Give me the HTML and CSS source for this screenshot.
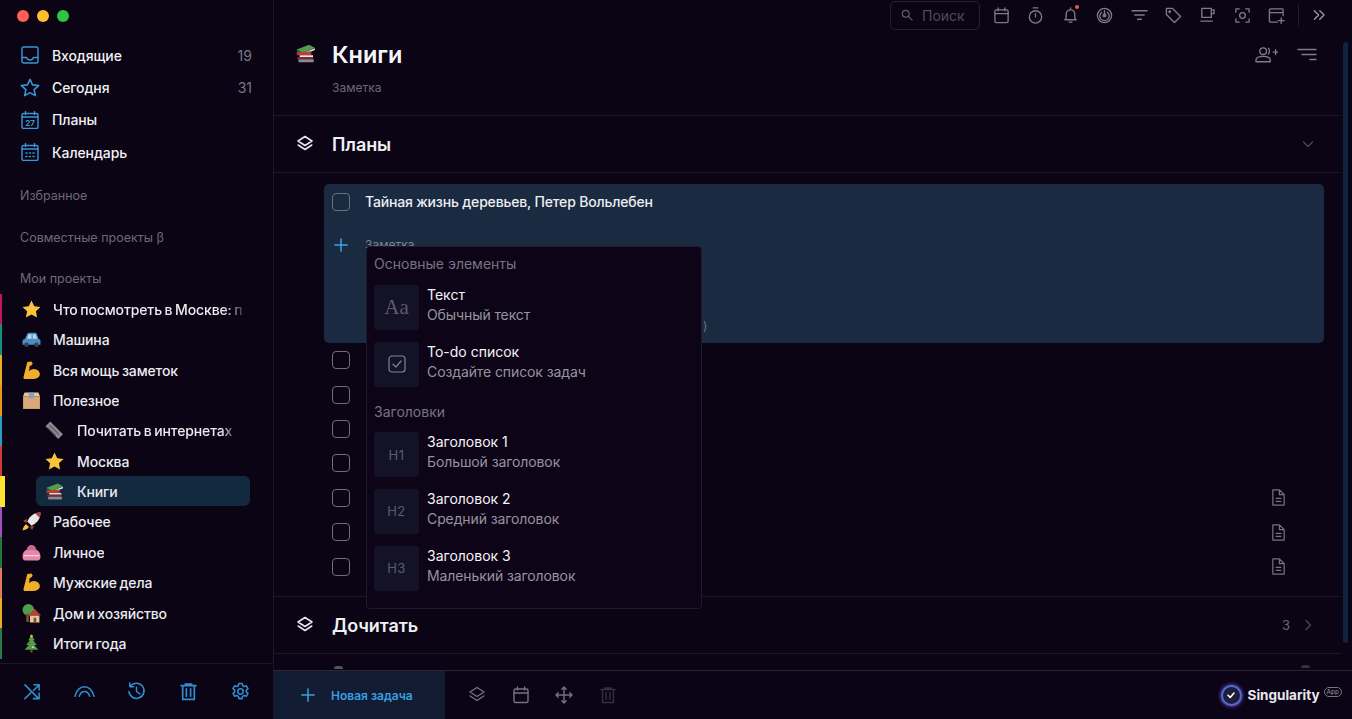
FILE: index.html
```html
<!DOCTYPE html>
<html lang="ru">
<head>
<meta charset="utf-8">
<title>Книги</title>
<link rel="stylesheet" href="styles.css">
</head>
<body>
<svg class="sprite" xmlns="http://www.w3.org/2000/svg">
  <symbol id="i-layers" viewBox="0 0 18 18"><path d="M9 1.500 16 6 9 10.500 2 6Z"/><path d="M2.200 10 9 14.500 15.800 10"/></symbol>
  <symbol id="i-cal" viewBox="0 0 18 18"><rect x="2" y="3" width="14" height="13.500" rx="1.500"/><path d="M2 7h14M5.500 1v3M12.500 1v3"/></symbol>
  <symbol id="i-trash" viewBox="0 0 18 18"><path d="M2 3.500h14M6 3.500V2h6v1.500M3.500 3.500V16.500h11V3.500M7 6.500v7M11 6.500v7"/></symbol>
  <symbol id="i-doc" viewBox="0 0 18 18"><path d="M3 1h7l5 5v11H3ZM10 1v5h5M6.500 10h5M6.500 13h5"/></symbol>
  <symbol id="i-plus" viewBox="0 0 16 16"><path d="M8 1v14M1 8h14"/></symbol>
  <symbol id="e-star" viewBox="0 0 18 18"><path class="f-star" d="M9 .5l2.600 5.400 5.900.8-4.300 4 1.100 5.800L9 13.700l-5.300 2.800 1.100-5.800-4.300-4 5.900-.8Z"/></symbol>
  <symbol id="e-arm" viewBox="0 0 18 18"><path class="f-arm" d="M5 1 9 .5l1.200 2-1.800 2-1.200.2-.4 5c1.800-2 4.300-2.800 6.700-1.700 2.800 1.200 3.800 3.200 3.300 5.500-.5 2.300-3.200 3.500-6.500 3.500H2.500c-1 0-1.300-1-1-2Z"/></symbol>
  <symbol id="e-books" viewBox="0 0 18 18"><path class="f-green" d="M1.500 5.500 12 1.500 17 4 7 8.500Z"/><path class="f-greend" d="M1.500 5.500 7 8.500V10L1.500 7Z"/><path class="f-white" d="M7 8.500 17 4.500V6L7 10Z"/><path class="f-red" d="M1.500 8 14 7v3.500H1.500Z"/><path class="f-white" d="M4 10.500h11.500V12H4Z"/><path class="f-redd" d="M2 12h13.500v2H2Z"/><path class="f-grey" d="M3 14h13v2.500H3Z"/></symbol>
  <symbol id="e-car" viewBox="0 0 18 18"><path class="f-blue" d="M.5 10.500c0-1.200 1-1.700 2.200-2L5 3.500C5.300 2.800 5.800 2.500 6.500 2.500h6c.7 0 1.200.3 1.500 1l1.800 5c1 .3 1.700.8 1.700 2v3.500H.5Z"/><path class="f-glass" d="M6.200 4h2.800v4.300H4.800ZM10.200 4h2.600l1.400 4.300h-4Z"/><circle class="f-dark" cx="4.300" cy="14" r="2.200"/><circle class="f-dark" cx="13.700" cy="14" r="2.200"/></symbol>
  <symbol id="e-box" viewBox="0 0 18 18"><path class="f-box" d="M1 5h16v12H1Z"/><path class="f-boxlight" d="M2.500 1.500h13L17 5H1Z"/><path class="f-bluegrey" d="M6.500 1.500h5V7h-5Z"/></symbol>
  <symbol id="e-paper" viewBox="0 0 18 18"><path class="f-grey" d="M5 .5 17 12.500 12.500 17 .5 5Z"/><path class="f-greyd" d="M4.500 4 13 12.500M2.500 6 10 13.500"/></symbol>
  <symbol id="e-rocket" viewBox="0 0 18 18"><path class="f-white" d="M17.500.5c-4 0-8 1.500-10.500 5l-2 3.500 4 4 3.500-2c3.500-2.500 5-6.500 5-10.500Z"/><path class="f-red" d="M17.500.5c-1.800 0-3.500.3-5 1l4 4c.7-1.500 1-3.200 1-5Z"/><path class="f-red" d="M5 6.500 1 8.500 4 10.500ZM11.500 13l-2 4-2-3Z"/><path class="f-star" d="M4 11.500c-1.500.5-2.800 2.300-3.500 6 3.500-.7 5.500-2 6-3.500Z"/></symbol>
  <symbol id="e-purse" viewBox="0 0 18 18"><path class="f-pink" d="M.5 13c0-5 3.500-7.500 8.500-7.500s8.500 2.500 8.500 7.500c0 2.500-1 3.500-2.500 3.500H3C1.500 16.500.5 15.500.5 13Z"/><path class="f-pinkl" d="M4.500 7.500C4.500 4 6.500 2 9 2s4.500 2 4.500 5.500c-2.500-1.200-6.500-1.200-9 0Z"/><path class="f-white" d="M1.500 11.500h15v1h-15Z"/></symbol>
  <symbol id="e-house" viewBox="0 0 18 18"><circle class="f-green" cx="6" cy="5.500" r="5.500"/><path class="f-wood" d="M4 9h2.500v8H4Z"/><path class="f-red" d="M12 4.500l6 6.500H6Z"/><path class="f-boxlight" d="M7.500 11h9v6.500h-9Z"/><path class="f-wood" d="M11 13h2.500v4.500H11Z"/></symbol>
  <symbol id="e-tree" viewBox="0 0 18 18"><path class="f-green" d="M9 .5l3 5.500h-1.500l3.500 4.500h-2.500l4 4.500h-13l4-4.500H4L7.500 6H6Z"/><path class="f-wood" d="M8 15h2v2.500H8Z"/><circle class="f-star" cx="9" cy="1.800" r="1.200"/><circle class="f-red" cx="7.500" cy="9" r=".8"/><circle class="f-white" cx="10.500" cy="12.500" r=".8"/></symbol>
</svg>

<div class="app">
  <aside class="sidebar">
    <div class="lights"><span class="light l-red"></span><span class="light l-yellow"></span><span class="light l-green"></span></div>
    <nav class="nav">
      <a class="nav-row">
        <svg class="nav-icon" viewBox="0 0 18 18"><rect x="1" y="1" width="16" height="16" rx="1.500"/><path d="M1 11.500h4.500c.7 2 2 2.500 3.500 2.500s2.800-.5 3.500-2.500H17"/></svg>
        <span class="nav-label">Входящие</span><span class="nav-count">19</span>
      </a>
      <a class="nav-row">
        <svg class="nav-icon nav-icon-lg" viewBox="0 0 18 18"><path d="M9 1.200l2.300 5 5.500.6-4.100 3.700 1.100 5.400L9 13.200l-4.800 2.700 1.100-5.400L1.200 6.800l5.500-.6Z"/></svg>
        <span class="nav-label">Сегодня</span><span class="nav-count">31</span>
      </a>
      <a class="nav-row">
        <svg class="nav-icon" viewBox="0 0 18 18"><rect x="1" y="2.500" width="16" height="15" rx="1.500"/><path d="M1 6h16M4.500 .5v3M13.500 .5v3"/><text class="cal-num" x="9" y="15" text-anchor="middle">27</text></svg>
        <span class="nav-label">Планы</span>
      </a>
      <a class="nav-row">
        <svg class="nav-icon" viewBox="0 0 18 18"><rect x="1" y="2.500" width="16" height="15" rx="1.500"/><path d="M1 6h16M4.500 .5v3M13.500 .5v3"/><path class="dots" d="M5 10h1M8.500 10h1M12 10h1M5 13.500h1M8.500 13.500h1M12 13.500h1"/></svg>
        <span class="nav-label">Календарь</span>
      </a>
    </nav>
    <div class="side-head side-head-fav">Избранное</div>
    <div class="side-head side-head-shared">Совместные проекты β</div>
    <div class="side-head side-head-mine">Мои проекты</div>
    <ul class="projects">
      <li class="proj c-crimson"><svg class="emoji"><use href="#e-star"/></svg><span class="proj-label fade">Что посмотреть в Москве: п</span></li>
      <li class="proj c-teal"><svg class="emoji"><use href="#e-car"/></svg><span class="proj-label">Машина</span></li>
      <li class="proj c-gold"><svg class="emoji"><use href="#e-arm"/></svg><span class="proj-label">Вся мощь заметок</span></li>
      <li class="proj c-orange"><svg class="emoji"><use href="#e-box"/></svg><span class="proj-label">Полезное</span></li>
      <li class="proj proj-sub c-cyan"><svg class="emoji"><use href="#e-paper"/></svg><span class="proj-label fade-sub">Почитать в интернетах</span></li>
      <li class="proj proj-sub c-red"><svg class="emoji"><use href="#e-star"/></svg><span class="proj-label">Москва</span></li>
      <li class="proj proj-sub proj-active c-yellow"><svg class="emoji"><use href="#e-books"/></svg><span class="proj-label">Книги</span></li>
      <li class="proj c-purple"><svg class="emoji"><use href="#e-rocket"/></svg><span class="proj-label">Рабочее</span></li>
      <li class="proj c-green"><svg class="emoji"><use href="#e-purse"/></svg><span class="proj-label">Личное</span></li>
      <li class="proj c-salmon"><svg class="emoji"><use href="#e-arm"/></svg><span class="proj-label">Мужские дела</span></li>
      <li class="proj c-gold"><svg class="emoji"><use href="#e-house"/></svg><span class="proj-label">Дом и хозяйство</span></li>
      <li class="proj c-green2"><svg class="emoji"><use href="#e-tree"/></svg><span class="proj-label">Итоги года</span></li>
    </ul>
    <div class="side-foot">
      <svg class="foot-icon" viewBox="0 0 20 20"><path d="M2 3l14.500 14.500M17 11.500V17.500H11M11.500 3H17V8.500M17 3 11 9M2 17.500 8 11.500"/></svg>
      <svg class="foot-icon foot-arc" viewBox="0 0 24 20"><path d="M2 15C4 8 8 5 12 5s8 3 10 10M6.500 15c1.200-3.500 3.200-5 5.500-5s4.300 1.500 5.500 5"/></svg>
      <svg class="foot-icon" viewBox="0 0 20 20"><path d="M3.500 4.500A8 8 0 1 1 2 10M3 1v4h4M10 5.500V10l3.500 2.500"/></svg>
      <svg class="foot-icon" viewBox="0 0 18 18"><use href="#i-trash"/></svg>
      <svg class="foot-icon" viewBox="0 0 20 20"><circle cx="10" cy="10" r="2.800"/><path d="M8.300 1.500h3.400l.5 2.400 1.700.9 2.300-.8 1.700 3-1.800 1.600v1.800l1.800 1.600-1.700 3-2.300-.8-1.700.9-.5 2.400H8.300l-.5-2.400-1.700-.9-2.300.8-1.700-3 1.800-1.600V8.600L2.100 7l1.700-3 2.300.8 1.700-.9Z"/></svg>
    </div>
  </aside>

  <main class="main">
    <div class="toolbar">
      <div class="search">
        <svg class="search-icon" viewBox="0 0 14 14"><circle cx="5.500" cy="5.500" r="4"/><path d="M8.500 8.500 13 13"/></svg>
        <span class="search-text">Поиск</span>
      </div>
      <div class="tools">
        <svg class="tool" viewBox="0 0 18 18"><use href="#i-cal"/></svg>
        <svg class="tool" viewBox="0 0 18 18"><circle cx="9" cy="10.500" r="6.500"/><path d="M6.500 1h5M9 7v3.500"/></svg>
        <span class="tool-wrap"><svg class="tool" viewBox="0 0 18 18"><path d="M3 13.500c1.200-1 1.500-2 1.500-3.500V7.500a4.500 4.500 0 0 1 9 0V10c0 1.500.3 2.500 1.500 3.500ZM9 1v2M7.500 16h3"/></svg><i class="badge"></i></span>
        <svg class="tool" viewBox="0 0 18 18"><circle cx="9" cy="9" r="7.500"/><path d="M6 5.500a5 5 0 1 0 6 0M9 3.500v6"/><circle cx="9" cy="9" r="1.500"/></svg>
        <svg class="tool" viewBox="0 0 18 18"><path d="M1 4h16M4 8.500h10M7 13h4"/></svg>
        <svg class="tool" viewBox="0 0 18 18"><path d="M1.500 1.500h6.500l8.500 8.500-6.500 6.500L1.500 8Z"/><circle cx="5" cy="5" r=".8"/></svg>
        <svg class="tool" viewBox="0 0 18 18"><path d="M3 1.500h10v9.500H3ZM13 3h3v4h-3M2 15h12"/></svg>
        <svg class="tool" viewBox="0 0 18 18"><circle cx="9" cy="9" r="3"/><path d="M2 5.500V2h3.500M12.500 2H16v3.500M16 12.500V16h-3.500M5.500 16H2v-3.500"/></svg>
        <svg class="tool" viewBox="0 0 18 18"><path d="M16 9V3a1 1 0 0 0-1-1H2.500a1 1 0 0 0-1 1v12a1 1 0 0 0 1 1H10M1.500 6H16M14 11.500v6M11 14.500h6"/></svg>
        <span class="tool-sep"></span>
        <svg class="tool tool-more" viewBox="0 0 18 18"><path d="M3 3.500 8.500 9 3 14.500M10 3.500 15.500 9 10 14.500"/></svg>
      </div>
    </div>

    <header class="page-head">
      <svg class="head-emoji"><use href="#e-books"/></svg>
      <div class="head-text">
        <h1 class="page-title">Книги</h1>
        <p class="page-sub">Заметка</p>
      </div>
      <div class="head-actions">
        <svg class="head-action" viewBox="0 0 24 18"><circle cx="8.500" cy="5" r="3.500"/><path d="M1 16v-1.500c0-2.500 3-4 7.500-4s7.500 1.500 7.500 4V16ZM14 2c1.500.8 1.500 5 0 6M19 6h5M21.500 3.500v5"/></svg>
        <svg class="head-action head-action-filter" viewBox="0 0 20 18"><path d="M1 3.500h18M5 8.500h14M13 13.500h6"/></svg>
      </div>
    </header>

    <section class="group">
      <svg class="group-icon"><use href="#i-layers"/></svg>
      <h2 class="group-title">Планы</h2>
      <svg class="chev" viewBox="0 0 12 12"><path d="M1.500 4 6 8.500 10.500 4"/></svg>
    </section>

    <div class="tasks">
      <div class="card">
        <div class="task-main">
          <span class="check"></span>
          <span class="task-title">Тайная жизнь деревьев, Петер Вольлебен</span>
        </div>
        <div class="note-row">
          <svg class="note-plus"><use href="#i-plus"/></svg>
          <span class="note-text">Заметка</span>
        </div>
        <div class="note-tail">)</div>
      </div>
      <div class="task"><span class="check"></span></div>
      <div class="task"><span class="check"></span></div>
      <div class="task"><span class="check"></span></div>
      <div class="task"><span class="check"></span></div>
      <div class="task"><span class="check"></span><svg class="task-doc"><use href="#i-doc"/></svg></div>
      <div class="task"><span class="check"></span><svg class="task-doc"><use href="#i-doc"/></svg></div>
      <div class="task"><span class="check"></span><svg class="task-doc"><use href="#i-doc"/></svg></div>
    </div>

    <section class="group group-next">
      <svg class="group-icon"><use href="#i-layers"/></svg>
      <h2 class="group-title">Дочитать</h2>
      <span class="group-count">3</span>
      <svg class="chev" viewBox="0 0 12 12"><path d="M4 1.500 8.500 6 4 10.500"/></svg>
    </section>
    <div class="peek"><span class="peek-blob"></span><span class="peek-blob peek-blob-right"></span></div>

    <footer class="bottom">
      <button class="new-task">
        <svg class="new-plus"><use href="#i-plus"/></svg>
        <span>Новая задача</span>
      </button>
      <div class="bottom-tools">
        <svg class="b-tool"><use href="#i-layers"/></svg>
        <svg class="b-tool"><use href="#i-cal"/></svg>
        <svg class="b-tool" viewBox="0 0 18 18"><path d="M9 1v16M1 9h16M6.800 3.200 9 1l2.200 2.200M6.800 14.800 9 17l2.200-2.200M3.200 6.800 1 9l2.200 2.200M14.800 6.800 17 9l-2.200 2.200"/></svg>
        <svg class="b-tool b-tool-dim"><use href="#i-trash"/></svg>
      </div>
      <div class="brand">
        <span class="brand-logo"><svg class="brand-check" viewBox="0 0 10 10"><path d="M2 5.200 4.200 7.400 8 3"/></svg></span>
        <span class="brand-name">Singularity</span>
        <span class="brand-app">App</span>
      </div>
    </footer>

    <div class="scrollbar"></div>

    <div class="popup">
      <div class="pop-head">Основные элементы</div>
      <div class="pop-item">
        <span class="pop-box pop-serif">Aa</span>
        <span class="pop-text"><b class="pop-name">Текст</b><span class="pop-desc">Обычный текст</span></span>
      </div>
      <div class="pop-item">
        <span class="pop-box"><svg class="pop-check" viewBox="0 0 18 18"><rect x="1" y="1" width="16" height="16" rx="3"/><path d="M5 9.200 8 12l5-6"/></svg></span>
        <span class="pop-text"><b class="pop-name">To-do список</b><span class="pop-desc">Создайте список задач</span></span>
      </div>
      <div class="pop-head pop-head-2">Заголовки</div>
      <div class="pop-item">
        <span class="pop-box pop-h">H1</span>
        <span class="pop-text"><b class="pop-name">Заголовок 1</b><span class="pop-desc">Большой заголовок</span></span>
      </div>
      <div class="pop-item">
        <span class="pop-box pop-h">H2</span>
        <span class="pop-text"><b class="pop-name">Заголовок 2</b><span class="pop-desc">Средний заголовок</span></span>
      </div>
      <div class="pop-item">
        <span class="pop-box pop-h">H3</span>
        <span class="pop-text"><b class="pop-name">Заголовок 3</b><span class="pop-desc">Маленький заголовок</span></span>
      </div>
    </div>
  </main>
</div>
</body>
</html>
```

FILE: styles.css
```css
* { box-sizing: border-box; }
html, body { margin: 0; height: 100%; }
body {
  background: #0a0415;
  color: #f2f2f5;
  font-family: Inter, "Noto Sans", sans-serif;
  font-size: 14px;
  overflow: hidden;
}
svg { fill: none; stroke: currentColor; stroke-linecap: round; stroke-linejoin: round; display: block; }
.sprite { position: absolute; width: 0; height: 0; }
p, h1, h2, ul { margin: 0; padding: 0; }
ul { list-style: none; }

.app { display: flex; width: 1352px; height: 719px; }

/* sidebar */
.sidebar {
  width: 274px;
  flex: none;
  display: flex;
  flex-direction: column;
  border-right: 1px solid #1b1626;
  background: #0a0415;
}
.lights { display: flex; gap: 8px; padding: 10px 0 0 17px; height: 39px; }
.light { width: 12px; height: 12px; border-radius: 50%; }
.l-red { background: #ff5f57; }
.l-yellow { background: #febc2e; }
.l-green { background: #28c840; }

.nav { display: flex; flex-direction: column; }
.nav-row { display: flex; align-items: center; height: 32.4px; padding: 0 21px; }
.nav-icon { width: 18px; height: 18px; color: #3a96d4; stroke-width: 1.4; flex: none; }
.nav-icon-lg { width: 20px; height: 20px; margin: 0 -1px; }
.cal-num { font: 700 8px Inter, sans-serif; fill: currentColor; stroke: none; }
.dots { stroke-width: 1.5; }
.nav-label { margin-left: 13px; font-weight: 500; font-size: 14px; letter-spacing: -.1px; color: #f1f1f4; flex: 1; }
.nav-count { color: #787684; font-size: 14px; }

.side-head { color: #6d6a78; font-size: 12.5px; padding-left: 20px; height: 16px; line-height: 16px; }
.side-head-fav { margin-top: 19px; }
.side-head-shared { margin-top: 26px; }
.side-head-mine { margin-top: 25px; }

.projects { margin-top: 7.5px; flex: 1; }
.proj {
  position: relative;
  display: flex;
  align-items: center;
  height: 30.4px;
  padding-left: 21px;
  border-left: 2px solid transparent;
}
.proj-sub { padding-left: 44px; }
.proj-active { border-left-width: 5px; padding-left: 41px; }
.proj-active::before {
  content: "";
  position: absolute;
  left: 31px; top: 0; width: 214px; height: 30px;
  border-radius: 6px;
  background: #13293f;
}
.emoji { width: 19px; height: 19px; flex: none; margin: 0 12px 0 -1px; stroke: none; position: relative; }
.proj-sub .emoji { margin-right: 13px; }
.proj-label {
  position: relative;
  font-weight: 500;
  font-size: 14px;
  letter-spacing: -.12px;
  word-spacing: -1px;
  color: #ececef;
  white-space: nowrap;
  overflow: hidden;
}
.fade { width: 189px; -webkit-mask-image: linear-gradient(90deg, #000 90%, rgba(0,0,0,.25) 100%); mask-image: linear-gradient(90deg, #000 90%, rgba(0,0,0,.25) 100%); }
.fade-sub { -webkit-mask-image: linear-gradient(90deg, #000 93%, rgba(0,0,0,.4) 100%); mask-image: linear-gradient(90deg, #000 93%, rgba(0,0,0,.4) 100%); }
.c-crimson { border-left-color: #c2185b; }
.c-teal { border-left-color: #14907f; }
.c-gold { border-left-color: #e8b020; }
.c-orange { border-left-color: #e8961e; }
.c-cyan { border-left-color: #2a9cc4; }
.c-red { border-left-color: #d23a34; }
.c-yellow { border-left-color: #ffe234; }
.c-purple { border-left-color: #a050c0; }
.c-green { border-left-color: #1f7a3a; }
.c-salmon { border-left-color: #e27a62; }
.c-green2 { border-left-color: #2a7a4a; }

.f-star { fill: #fbc33a; }
.f-arm { fill: #f0ae2a; }
.f-green { fill: #4f9e4a; }
.f-greend { fill: #2f6e34; }
.f-white { fill: #e8e8ea; }
.f-red { fill: #b8403a; }
.f-redd { fill: #7e2c30; }
.f-dark { fill: #3c4048; }
.f-blue { fill: #4a8cc8; }
.f-glass { fill: #bcd8ee; }
.f-box { fill: #d8a878; }
.f-boxlight { fill: #ecc49a; }
.f-bluegrey { fill: #8ea0b8; }
.f-grey { fill: #8a8a90; }
.f-greyd { stroke: #55555c; stroke-width: 1; }
.f-pink { fill: #e887a8; }
.f-pinkl { fill: #c86a8a; }
.f-wood { fill: #7a5030; }

.side-foot {
  height: 56px;
  flex: none;
  border-top: 1px solid #1b1626;
  display: grid;
  grid-template-columns: repeat(5, 52px);
  justify-items: center;
  align-items: center;
  padding-left: 6px;
}
.foot-icon { width: 19px; height: 19px; color: #2f8fd0; stroke-width: 1.6; }
.foot-arc { width: 23px; }

/* main */
.main { position: relative; flex: 1; min-width: 0; display: flex; flex-direction: column; overflow: hidden; }
.toolbar { height: 32px; flex: none; display: flex; align-items: center; padding-left: 616px; }
.search {
  width: 90px; height: 29px;
  margin-top: -2px;
  border: 1px solid #25212f;
  border-radius: 5px;
  display: flex;
  align-items: center;
  padding-left: 10px;
}
.search-icon { width: 12px; height: 12px; color: #5f5c6a; stroke-width: 1.4; }
.search-text { margin-left: 9px; color: #4f4c5a; font-size: 14px; }
.tools { display: flex; align-items: center; margin-left: 13px; margin-top: -2px; }
.tool { width: 17px; height: 17px; color: #7e7c87; stroke-width: 1.4; margin-right: 17.4px; }
.tool-wrap { position: relative; display: block; }
.badge { position: absolute; left: 13px; top: -2px; width: 4px; height: 4px; border-radius: 50%; background: #f0564e; }
.tool-sep { width: 1px; height: 22px; background: #1f1b2a; margin: 0 13px 0 -5px; }
.tool-more { width: 14px; height: 14px; margin: 0; color: #9b99a3; stroke-width: 1.7; }

.page-head {
  position: relative;
  height: 84px;
  flex: none;
  display: flex;
  padding: 0 0 0 21px;
  border-bottom: 1px solid #1d1829;
  width: 1067px;
}
.head-emoji { width: 21px; height: 21px; margin-top: 11px; stroke: none; flex: none; }
.head-text { margin-left: 16px; flex: 1; }
.page-title { font-size: 23.5px; font-weight: 600; line-height: 30px; margin-top: 8px; color: #f6f6f8; }
.page-sub { font-size: 12px; color: #6b6976; line-height: 16px; margin-top: 10px; }
.head-actions { display: flex; gap: 19px; padding: 14px 24px 0 0; align-items: flex-start; }
.head-action { width: 23px; height: 18px; color: #7e7c87; stroke-width: 1.4; }
.head-action-filter { width: 20px; }

.group {
  height: 57px;
  width: 1067px;
  flex: none;
  display: flex;
  align-items: center;
  padding: 0 26px 0 22px;
  border-bottom: 1px solid #1d1829;
}
.group-icon { width: 18px; height: 18px; color: #e9e9ec; stroke-width: 1.5; flex: none; }
.group-title { font-size: 18px; font-weight: 600; letter-spacing: -.1px; margin-left: 18px; flex: 1; color: #f0f0f3; }
.group-count { color: #6a6874; font-size: 13px; margin-right: 12px; }
.chev { width: 12px; height: 12px; color: #4e4b59; stroke-width: 1.2; margin-right: 1px; }

.tasks {
  flex: none;
  padding: 11px 17px 0 50px;
  height: 424px;
  width: 1067px;
  border-bottom: 1px solid #1d1829;
}
.card {
  height: 159px;
  border-radius: 5px;
  background: #1a2a41;
  padding: 8px 8px 0;
  position: relative;
}
.task-main { display: flex; align-items: center; height: 20px; }
.check { width: 18px; height: 18px; border: 1.5px solid #6f6e79; border-radius: 4px; flex: none; display: block; }
.task-title { margin: -1px 0 0 15px; font-size: 14px; font-weight: 500; letter-spacing: -.18px; color: #eeeef2; }
.note-row { display: flex; align-items: center; margin-top: 23px; height: 20px; }
.note-plus { width: 14px; height: 14px; color: #3ba3e4; stroke-width: 1.7; margin-left: 2px; }
.note-text { margin: -2px 0 0 17px; font-size: 12px; color: #7d8090; }
.note-tail { margin: 63px 0 0 371px; color: #70727f; font-size: 12px; line-height: 16px; }
.task { display: flex; align-items: center; justify-content: space-between; height: 34.4px; padding: 0 37px 0 8px; }
.task-doc { width: 17px; height: 17px; color: #757380; stroke-width: 1.3; }
.group-next { height: 57px; }
.peek { position: relative; flex: 1; }
.peek-blob { position: absolute; left: 60px; top: 12px; width: 9px; height: 3px; border-radius: 3px 3px 0 0; background: #55535f; }
.peek-blob-right { left: 1027px; top: 11px; width: 9px; background: #35323f; }

.bottom {
  height: 49px;
  flex: none;
  display: flex;
  align-items: center;
  border-top: 1px solid #2a2636;
  background: #0b0416;
}
.new-task {
  width: 171px;
  height: 100%;
  display: flex;
  align-items: center;
  border: 0;
  background: #121c33;
  padding: 0 0 0 27px;
  color: #3a9fe0;
  font: 600 12px Inter, sans-serif;
}
.new-plus { width: 14px; height: 14px; stroke-width: 1.7; margin-right: 16px; }
.bottom-tools { display: flex; gap: 25.5px; margin-left: 23px; flex: 1; }
.b-tool { width: 18px; height: 18px; color: #747280; stroke-width: 1.4; }
.b-tool-dim { color: #33303e; }
.brand { display: flex; align-items: center; padding-right: 10px; }
.brand-logo {
  width: 21px; height: 21px;
  border-radius: 50%;
  background: #1d1c3a;
  border: 2.5px solid #4d6bdc;
  box-shadow: 0 0 4px #8a5ce0;
  display: flex;
  align-items: center;
  justify-content: center;
}
.brand-check { width: 10px; height: 10px; color: #fff; stroke-width: 1.6; }
.brand-name { margin-left: 6px; font-size: 13.5px; font-weight: 700; color: #e8e8ec; }
.brand-app {
  margin: -7px 0 0 4px;
  font-size: 6.5px;
  line-height: 8px;
  padding: 0 2px;
  border: 1px solid #77757f;
  border-radius: 5px;
  color: #9c9aa4;
}

.scrollbar { position: absolute; left: 1069px; top: 42px; width: 5px; height: 601px; border-radius: 3px; background: #10233c; }

/* popup */
.popup {
  position: absolute;
  left: 91.5px; top: 246px;
  width: 336px; height: 363px;
  background: #0d0418;
  border: 1px solid #1f1b2c;
  border-radius: 4px;
  padding: 8px 7.5px;
}
.pop-head { font-size: 14px; color: #77747f; line-height: 18px; height: 18px; margin-bottom: 12px; }
.pop-head-2 { margin: 16px 0 11.5px; }
.pop-item { display: flex; height: 45px; margin-bottom: 11.7px; }
.pop-box {
  width: 45px; height: 45px;
  flex: none;
  background: #141226;
  border-radius: 3px;
  display: flex;
  align-items: center;
  justify-content: center;
  color: #5e5c68;
}
.pop-serif { font-family: "Liberation Serif", serif; font-size: 21px; }
.pop-h { font-size: 13px; letter-spacing: .5px; color: #5e5c6c; }
.pop-check { width: 18px; height: 18px; color: #85838e; stroke-width: 1.2; }
.pop-text { display: flex; flex-direction: column; margin-left: 8px; }
.pop-name { font-size: 14px; font-weight: 400; color: #f4f4f7; line-height: 19px; }
.pop-desc { font-size: 14px; letter-spacing: -.1px; color: #96949e; line-height: 19px; margin-top: 1px; }
```
